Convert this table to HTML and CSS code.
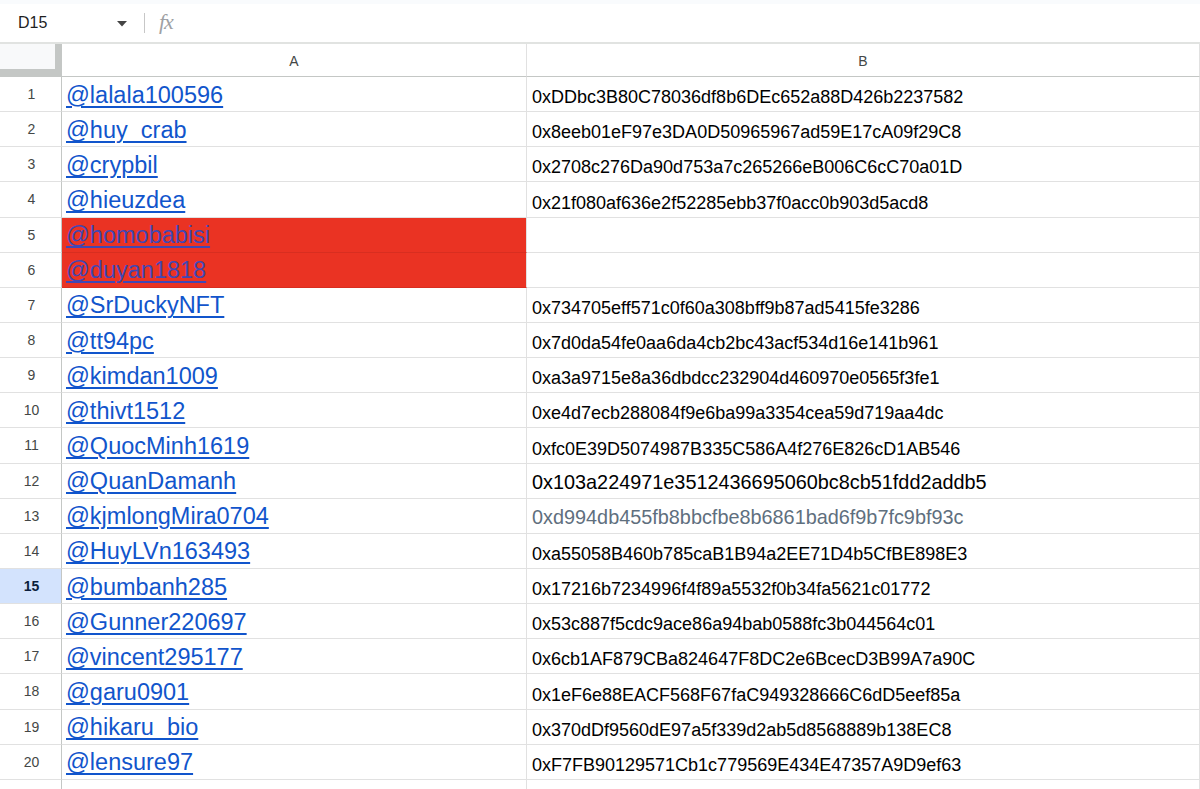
FILE: index.html
```html
<!DOCTYPE html>
<html>
<head>
<meta charset="utf-8">
<link rel="stylesheet" href="styles.css">
</head>
<body>
<div class="topstrip"></div>
<div class="fbar">
  <div class="namebox">D15</div>
  <svg class="caret" width="10" height="6" viewBox="0 0 10 6"><path d="M0 0h10L5 5.5z" fill="#444"/></svg>
  <div class="fsep"></div>
  <div class="fx">fx</div>
</div>
<div class="grid">
  <div class="row hrow">
    <div class="corner"></div>
    <div class="colhead a">A</div>
    <div class="colhead b">B</div>
  </div>
  <div class="row"><div class="rn">1</div><div class="ca"><a href="#">@lalala100596</a></div><div class="cb">0xDDbc3B80C78036df8b6DEc652a88D426b2237582</div></div>
  <div class="row"><div class="rn">2</div><div class="ca"><a href="#">@huy_crab</a></div><div class="cb">0x8eeb01eF97e3DA0D50965967ad59E17cA09f29C8</div></div>
  <div class="row"><div class="rn">3</div><div class="ca"><a href="#">@crypbil</a></div><div class="cb">0x2708c276Da90d753a7c265266eB006C6cC70a01D</div></div>
  <div class="row"><div class="rn">4</div><div class="ca"><a href="#">@hieuzdea</a></div><div class="cb">0x21f080af636e2f52285ebb37f0acc0b903d5acd8</div></div>
  <div class="row"><div class="rn">5</div><div class="ca red"><a href="#">@homobabisi</a></div><div class="cb"></div></div>
  <div class="row"><div class="rn">6</div><div class="ca red"><a href="#">@duyan1818</a></div><div class="cb"></div></div>
  <div class="row"><div class="rn">7</div><div class="ca"><a href="#">@SrDuckyNFT</a></div><div class="cb">0x734705eff571c0f60a308bff9b87ad5415fe3286</div></div>
  <div class="row"><div class="rn">8</div><div class="ca"><a href="#">@tt94pc</a></div><div class="cb">0x7d0da54fe0aa6da4cb2bc43acf534d16e141b961</div></div>
  <div class="row"><div class="rn">9</div><div class="ca"><a href="#">@kimdan1009</a></div><div class="cb">0xa3a9715e8a36dbdcc232904d460970e0565f3fe1</div></div>
  <div class="row"><div class="rn">10</div><div class="ca"><a href="#">@thivt1512</a></div><div class="cb">0xe4d7ecb288084f9e6ba99a3354cea59d719aa4dc</div></div>
  <div class="row"><div class="rn">11</div><div class="ca"><a href="#">@QuocMinh1619</a></div><div class="cb">0xfc0E39D5074987B335C586A4f276E826cD1AB546</div></div>
  <div class="row"><div class="rn">12</div><div class="ca"><a href="#">@QuanDamanh</a></div><div class="cb big">0x103a224971e3512436695060bc8cb51fdd2addb5</div></div>
  <div class="row"><div class="rn">13</div><div class="ca"><a href="#">@kjmlongMira0704</a></div><div class="cb big gray">0xd994db455fb8bbcfbe8b6861bad6f9b7fc9bf93c</div></div>
  <div class="row"><div class="rn">14</div><div class="ca"><a href="#">@HuyLVn163493</a></div><div class="cb">0xa55058B460b785caB1B94a2EE71D4b5CfBE898E3</div></div>
  <div class="row"><div class="rn sel">15</div><div class="ca"><a href="#">@bumbanh285</a></div><div class="cb">0x17216b7234996f4f89a5532f0b34fa5621c01772</div></div>
  <div class="row"><div class="rn">16</div><div class="ca"><a href="#">@Gunner220697</a></div><div class="cb">0x53c887f5cdc9ace86a94bab0588fc3b044564c01</div></div>
  <div class="row"><div class="rn">17</div><div class="ca"><a href="#">@vincent295177</a></div><div class="cb">0x6cb1AF879CBa824647F8DC2e6BcecD3B99A7a90C</div></div>
  <div class="row"><div class="rn">18</div><div class="ca"><a href="#">@garu0901</a></div><div class="cb">0x1eF6e88EACF568F67faC949328666C6dD5eef85a</div></div>
  <div class="row"><div class="rn">19</div><div class="ca"><a href="#">@hikaru_bio</a></div><div class="cb">0x370dDf9560dE97a5f339d2ab5d8568889b138EC8</div></div>
  <div class="row"><div class="rn">20</div><div class="ca"><a href="#">@lensure97</a></div><div class="cb">0xF7FB90129571Cb1c779569E434E47357A9D9ef63</div></div>
  <div class="row"><div class="rn"></div><div class="ca"></div><div class="cb"></div></div>
</div>
</body>
</html>
```
FILE: styles.css
```css
* { box-sizing: border-box; }
html, body { margin: 0; padding: 0; background: #fff; overflow: hidden; }
body { font-family: "Liberation Sans", Arial, sans-serif; width: 1200px; height: 789px; }

.topstrip { height: 4px; background: #f9fbfd; }
.fbar {
  height: 40px;
  display: flex;
  align-items: center;
  border-bottom: 2px solid #e1e3e1;
}
.namebox { font-size: 16px; color: #1f1f1f; padding-left: 18px; width: 117px; }
.caret { margin-top: 1px; }
.fsep { width: 1px; height: 20px; background: #c7c7c7; margin-left: 17px; }
.fx {
  font-family: "Liberation Serif", serif;
  font-style: italic;
  font-size: 22px;
  color: #9ea1a4;
  margin-left: 14px;
  margin-top: -2px;
  letter-spacing: -1px;
}

.row {
  display: grid;
  grid-template-columns: 62px 465px 1fr;
  height: 35.15px;
}
.hrow { height: 33px; }
.corner {
  background: #f8f9fa;
  border-right: 7px solid #c4c7c5;
  border-bottom: 8px solid #c4c7c5;
}
.colhead {
  display: flex;
  align-items: center;
  justify-content: center;
  font-size: 14px;
  color: #444746;
  border-bottom: 1px solid #c4c7c5;
  border-right: 1px solid #e1e1e1;
  padding-top: 1px;
}
.rn {
  display: flex;
  align-items: center;
  justify-content: center;
  font-size: 14px;
  color: #444746;
  border-right: 1px solid #c4c7c5;
  border-bottom: 1px solid #e1e1e1;
  padding-left: 2px;
}
.rn.sel { background: #d3e3fd; color: #0b1e3c; font-weight: bold; }
.ca, .cb {
  display: flex;
  align-items: flex-end;
  border-right: 1px solid #e1e1e1;
  border-bottom: 1px solid #e1e1e1;
  white-space: nowrap;
  overflow: hidden;
}
.ca { padding: 0 0 4px 4px; }
.ca a {
  font-size: 23.5px;
  line-height: 1;
  color: #1155cc;
  text-decoration: underline;
  text-underline-offset: 3px;
  text-decoration-thickness: 1.5px;
}
.ca.red { background: #ea3323; border-bottom-color: #d82e20; }
.ca.red a { color: #4147b4; }
.cb {
  padding: 0 0 5px 5px;
  font-size: 18px;
  line-height: 1;
  color: #000;
}
.cb.big { font-size: 19.85px; padding-bottom: 4.5px; }
.cb.gray { color: #5f6f7e; }
```
